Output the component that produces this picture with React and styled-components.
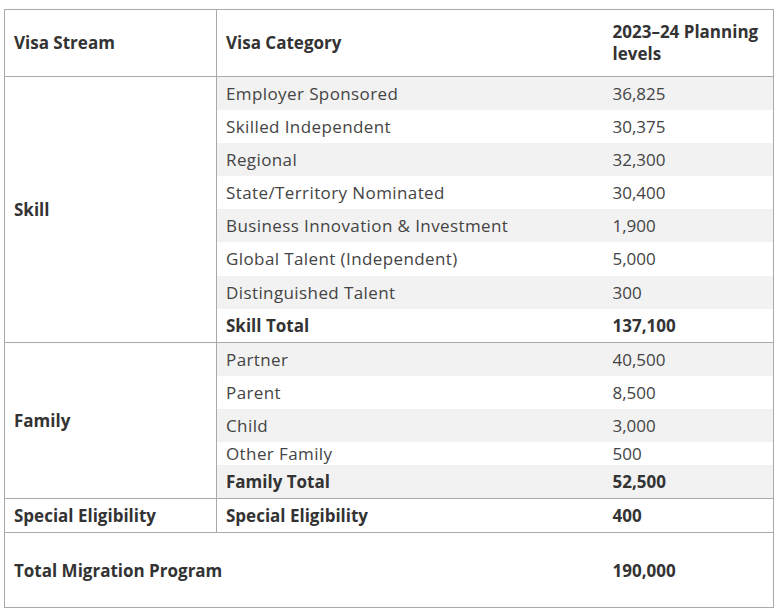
import React from "react";
import styled, { createGlobalStyle } from "styled-components";

const Global = createGlobalStyle`
  html, body { margin: 0; padding: 0; background: #fff; }
  body { font-family: "Open Sans", "Noto Sans", sans-serif; }
`;

const Wrap = styled.div`
  padding: 9px 0 0 4px;
`;

const Table = styled.table`
  width: 769px;
  border-collapse: collapse;
  table-layout: fixed;
  border: 1px solid #a9a9a9;
  font-size: 17px;
  color: #444;
`;

const Row = styled.tr`
  border-bottom: ${(p) => (p.$divider ? "1px solid #a9a9a9" : "none")};
`;

const HeadCell = styled.th`
  text-align: left;
  font-weight: 700;
  color: #333;
  padding: 11px 10px 11px 9px;
  line-height: 22px;
  vertical-align: middle;
  border-right: ${(p) => (p.$line ? "1px solid #a9a9a9" : "none")};
`;

const Cell = styled.td`
  padding: ${(p) => (p.$tight ? "0 10px 0 9px" : p.$tall ? "25.3px 10px 25.3px 9px" : "5px 10px 5px 9px")};
  line-height: ${(p) => (p.$tall ? "23px" : "23.1px")};
  vertical-align: middle;
  white-space: nowrap;
  background: ${(p) => (p.$shade ? "#f2f2f2" : "#fff")};
  font-weight: ${(p) => (p.$bold ? 700 : 400)};
  letter-spacing: ${(p) => (p.$text && !p.$bold ? "0.4px" : "0")};
  color: ${(p) => (p.$bold ? "#333" : "#444")};
  border-right: ${(p) => (p.$line ? "1px solid #a9a9a9" : "none")};
`;

const skill = [
  ["Employer Sponsored", "36,825"],
  ["Skilled Independent", "30,375"],
  ["Regional", "32,300"],
  ["State/Territory Nominated", "30,400"],
  ["Business Innovation & Investment", "1,900"],
  ["Global Talent (Independent)", "5,000"],
  ["Distinguished Talent", "300"],
];

const family = [
  ["Partner", "40,500"],
  ["Parent", "8,500"],
  ["Child", "3,000"],
  ["Other Family", "500", true],
];

export default function App() {
  return (
    <>
      <Global />
      <Wrap>
        <Table>
          <colgroup>
            <col style={{ width: 212 }} />
            <col style={{ width: 387 }} />
            <col style={{ width: 170 }} />
          </colgroup>
          <thead>
            <Row $divider>
              <HeadCell $line>Visa Stream</HeadCell>
              <HeadCell>Visa Category</HeadCell>
              <HeadCell>2023–24 Planning levels</HeadCell>
            </Row>
          </thead>
          <tbody>
            {skill.map(([cat, val], i) => (
              <Row key={cat}>
                {i === 0 && (
                  <Cell rowSpan={8} $bold $line>
                    Skill
                  </Cell>
                )}
                <Cell $text $shade={i % 2 === 0}>{cat}</Cell>
                <Cell $shade={i % 2 === 0}>{val}</Cell>
              </Row>
            ))}
            <Row $divider>
              <Cell $bold>Skill Total</Cell>
              <Cell $bold>137,100</Cell>
            </Row>
            {family.map(([cat, val, tight], i) => (
              <Row key={cat}>
                {i === 0 && (
                  <Cell rowSpan={5} $bold $line>
                    Family
                  </Cell>
                )}
                <Cell $text $shade={i % 2 === 0} $tight={tight}>{cat}</Cell>
                <Cell $shade={i % 2 === 0} $tight={tight}>{val}</Cell>
              </Row>
            ))}
            <Row $divider>
              <Cell $bold $shade>Family Total</Cell>
              <Cell $bold $shade>52,500</Cell>
            </Row>
            <Row $divider>
              <Cell $bold $line>Special Eligibility</Cell>
              <Cell $bold>Special Eligibility</Cell>
              <Cell $bold>400</Cell>
            </Row>
            <Row>
              <Cell colSpan={2} $bold $tall>Total Migration Program</Cell>
              <Cell $bold $tall>190,000</Cell>
            </Row>
          </tbody>
        </Table>
      </Wrap>
    </>
  );
}
